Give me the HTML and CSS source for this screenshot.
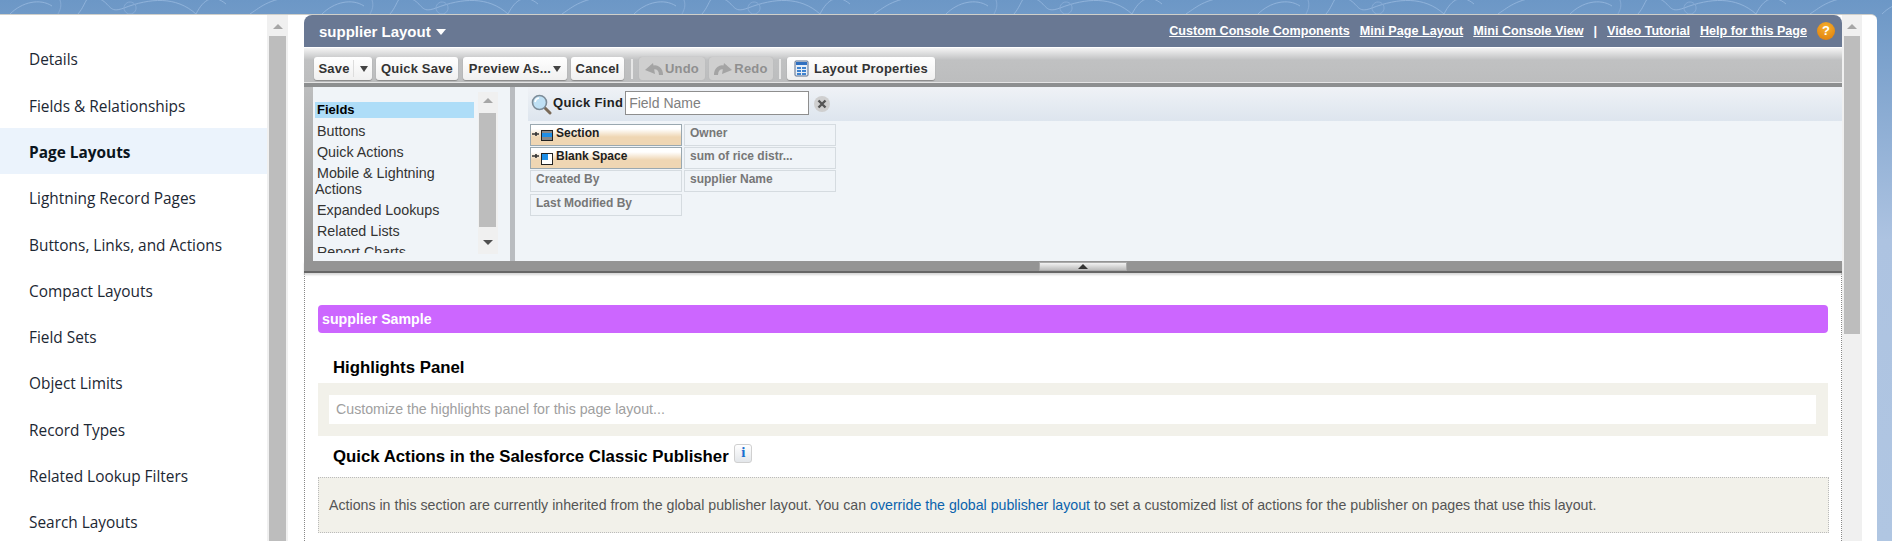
FILE: index.html
```html
<!DOCTYPE html>
<html lang="en">
<head>
    <meta charset="UTF-8">
    <title>supplier Layout</title>
    <link rel="stylesheet" href="styles.css">
</head>
<body>

    <svg class="waves" width="1892" height="80">
        <defs>
            <pattern id="wave" width="312" height="80" patternUnits="userSpaceOnUse">
                <path d="M10 14C22 2 40 -2 52 6M78 14C88 2 84 -6 98 -2C112 4 108 14 124 8C150 -2 176 -4 196 14C204 -2 214 -6 226 4M250 14C262 6 270 -2 300 -4" fill="none" stroke="#8fb2da" stroke-width="1"/>
                <path d="M130 2a6 6 0 1 0 .1 0M60 0C62 6 60 10 58 14" fill="none" stroke="#84a9d4" stroke-width="1"/>
            </pattern>
        </defs>
        <rect width="1892" height="80" fill="url(#wave)"/>
    </svg>

    <div class="shell">

        <!-- menu de la izquierda -->
        <ul class="side-menu">
            <li>Details</li>
            <li>Fields &amp; Relationships</li>
            <li class="active">Page Layouts</li>
            <li>Lightning Record Pages</li>
            <li>Buttons, Links, and Actions</li>
            <li>Compact Layouts</li>
            <li>Field Sets</li>
            <li>Object Limits</li>
            <li>Record Types</li>
            <li>Related Lookup Filters</li>
            <li>Search Layouts</li>
        </ul>
        <div class="scroll side-scroll">
            <span class="arrow-up"></span>
            <div class="thumb side-thumb"></div>
        </div>

        <div class="editor">
            <div class="editor-head">
                <div class="editor-title">supplier Layout <span class="caret"></span></div>
                <div class="head-links">
                    <a>Custom Console Components</a>
                    <a>Mini Page Layout</a>
                    <a>Mini Console View</a>
                    <span>|</span>
                    <a>Video Tutorial</a>
                    <a>Help for this Page</a>
                    <span class="help-icon">?</span>
                </div>
            </div>

            <div class="toolbar">
                <div class="btn btn-save"><span>Save</span><i class="split"></i><span class="tri-down"></span></div>
                <div class="btn btn-quick">Quick Save</div>
                <div class="btn btn-preview">Preview As...<span class="tri-down"></span></div>
                <div class="btn btn-cancel">Cancel</div>
                <i class="sep"></i>
                <div class="btn btn-off btn-undo">
                    <svg width="18" height="15" viewBox="0 0 18 15">
                        <path d="M16 14C16 8 12 5 7 7" fill="none" stroke="#a4a4a4" stroke-width="4"/>
                        <path d="M0 9L8 2L10 13z" fill="#a4a4a4"/>
                    </svg>
                    Undo
                </div>
                <div class="btn btn-off btn-redo">
                    <svg width="18" height="15" viewBox="0 0 18 15">
                        <path d="M2 14C2 8 6 5 11 7" fill="none" stroke="#a4a4a4" stroke-width="4"/>
                        <path d="M18 9L10 2L8 13z" fill="#a4a4a4"/>
                    </svg>
                    Redo
                </div>
                <i class="sep"></i>
                <div class="btn btn-props">
                    <svg width="15" height="17" viewBox="0 0 15 17">
                        <rect x="1" y="1" width="13" height="15" rx="1" fill="#e8eef6" stroke="#5a6f8c"/>
                        <rect x="2" y="2" width="11" height="3" fill="#2f6fc0"/>
                        <path d="M3 7h4v2H3zM8 7h4v2H8zM3 10h4v2H3zM8 10h4v2H8zM3 13h4v2H3zM8 13h4v2H8z" fill="#3f83cf"/>
                    </svg>
                    Layout Properties
                </div>
            </div>

            <div class="palette">
                <div class="palette-left">
                    <ul class="cat-list">
                        <li class="cat-on">Fields</li>
                        <li>Buttons</li>
                        <li>Quick Actions</li>
                        <li>Mobile &amp; Lightning Actions</li>
                        <li>Expanded Lookups</li>
                        <li>Related Lists</li>
                        <li>Report Charts</li>
                    </ul>
                    <div class="scroll cat-scroll">
                        <span class="arrow-up"></span>
                        <div class="thumb cat-thumb"></div>
                        <span class="arrow-down"></span>
                    </div>
                </div>
                <div class="palette-right">
                    <div class="quick-find">
                        <svg width="21" height="21" viewBox="0 0 21 21">
                            <path d="M13 13l6 6" stroke="#7a6a58" stroke-width="3" stroke-linecap="round"/>
                            <circle cx="8.5" cy="8.5" r="7" fill="#bfe0f4" stroke="#7d8c98" stroke-width="1.6"/>
                            <path d="M4 8a5 5 0 0 1 4-4" fill="none" stroke="#fff" stroke-width="1.6"/>
                        </svg>
                        <b>Quick Find</b>
                        <input class="find-box" type="text" placeholder="Field Name">
                        <span class="clear-icon">
                            <svg width="10" height="10" viewBox="0 0 10 10"><path d="M1.5 1.5l7 7M8.5 1.5l-7 7" stroke="#555" stroke-width="2.4"/></svg>
                        </span>
                    </div>
                    <div class="chips">
                        <div class="chip chip-drag">
                            <svg width="22" height="12" viewBox="0 0 22 12">
                                <path d="M5 3v4M1 5h7" stroke="#333" stroke-width="1.6"/>
                                <rect x="10.5" y="1.5" width="11" height="10" fill="#1e8ee6" stroke="#222"/>
                                <rect x="11" y="2" width="10" height="2" fill="#888"/>
                                <rect x="11" y="8" width="10" height="3" fill="#888"/>
                            </svg>
                            Section
                        </div>
                        <div class="chip">Owner</div>
                        <div class="chip chip-drag">
                            <svg width="22" height="13" viewBox="0 0 22 13">
                                <path d="M5 2v4M1 4h7" stroke="#333" stroke-width="1.6"/>
                                <rect x="10.5" y="1.5" width="11" height="11" fill="#fff" stroke="#222"/>
                                <rect x="11" y="2" width="6" height="6" fill="#1e8ee6"/>
                            </svg>
                            Blank Space
                        </div>
                        <div class="chip">sum of rice distr...</div>
                        <div class="chip">Created By</div>
                        <div class="chip">supplier Name</div>
                        <div class="chip chip-last">Last Modified By</div>
                    </div>
                </div>
            </div>

            <div class="splitter">
                <div class="splitter-handle"><span class="arrow-up arrow-dark"></span></div>
            </div>

            <div class="layout-body">
                <div class="sample-bar">supplier Sample</div>

                <h3 class="sec-title first">Highlights Panel</h3>
                <div class="highlights">
                    <div class="highlights-in">Customize the highlights panel for this page layout...</div>
                </div>

                <h3 class="sec-title second">Quick Actions in the Salesforce Classic Publisher <span class="info-icon">i</span></h3>
                <div class="inherit-box">
                    Actions in this section are currently inherited from the global publisher layout. You can <a>override the global publisher layout</a> to set a customized list of actions for the publisher on pages that use this layout.
                </div>
            </div>
        </div>

        <div class="scroll main-scroll">
            <span class="arrow-up"></span>
            <div class="thumb main-thumb"></div>
        </div>
    </div>

</body>
</html>
```

FILE: styles.css
```css
html, body {
    margin: 0;
    height: 541px;
    overflow: hidden;
}
body {
    font-family: "Liberation Sans", Arial, sans-serif;
    background: linear-gradient(#6c97c6 0, #adc3e1 240px, #b0c6e2 541px);
    position: relative;
}
ul {
    list-style: none;
    margin: 0;
    padding: 0;
}
.waves {
    position: absolute;
    top: 0;
    left: 0;
}

.shell {
    position: relative;
    display: flex;
    height: 526px;
    margin: 14px 15px 0 0;
    background-color: #fff;
    border-top: 1px solid #cfcfca;
    border-top-right-radius: 6px;
    overflow: hidden;
}

/* menu izquierdo */
.side-menu {
    width: 267px;
    flex: none;
    padding-top: 20.4px;
    font-family: "Open Sans", sans-serif;
    font-size: 15.4px;
}
.side-menu li {
    height: 46.3px;
    line-height: 50px;
    padding-left: 29px;
    box-sizing: border-box;
    color: #1c2733;
}
.side-menu .active {
    background-color: #ebf3fc;
    font-weight: 700;
    color: #0b1520;
}

/* barras de scroll */
.scroll {
    flex: none;
    display: flex;
    flex-direction: column;
    align-items: center;
    background-color: #f0f0f0;
}
.thumb {
    background-color: #bdbdbd;
}
.arrow-up, .arrow-down, .tri-down, .caret {
    display: block;
    width: 0;
    height: 0;
    border-left: 5px solid transparent;
    border-right: 5px solid transparent;
}
.arrow-up {
    border-bottom: 5px solid #a6a6a6;
}
.arrow-down {
    border-top: 5px solid #505050;
}
.side-scroll {
    width: 21px;
    margin-right: 16px;
    padding-top: 9px;
    box-sizing: border-box;
}
.side-thumb {
    width: 17px;
    flex: 1;
    margin-top: 7px;
}
.main-scroll {
    width: 20px;
    padding-top: 9px;
    box-sizing: border-box;
}
.main-thumb {
    width: 16px;
    height: 298px;
    margin-top: 7px;
}

/* editor */
.editor {
    width: 1538px;
    flex: none;
}
.editor-head {
    height: 32px;
    display: flex;
    align-items: center;
    justify-content: space-between;
    padding: 0 7px 0 15px;
    background-color: #697893;
    border-radius: 8px 8px 0 0;
    color: #fff;
}
.editor-title {
    display: flex;
    align-items: center;
    font-size: 15px;
    font-weight: bold;
}
.caret {
    margin-left: 5px;
    margin-top: 2px;
    border-top: 6px solid #fff;
}
.head-links {
    display: flex;
    align-items: center;
    gap: 10px;
    font-size: 12.6px;
    font-weight: bold;
}
.head-links a {
    text-decoration: underline;
}
.help-icon {
    width: 18px;
    height: 18px;
    border-radius: 50%;
    background: radial-gradient(circle at 50% 30%, #f7b12e, #dd7a08);
    font-size: 13px;
    font-weight: bold;
    line-height: 18px;
    text-align: center;
    color: #fff;
}

.toolbar {
    height: 40px;
    display: flex;
    align-items: flex-start;
    padding: 9px 0 0 10px;
    box-sizing: border-box;
    border-top: 1px solid #fff;
    border-bottom: 4px solid #8d8f90;
    background: linear-gradient(#f4f4f4 0, #c0c1c2 12px, #bcbdbe 100%);
    box-shadow: inset 0 -1px 0 #e4e4e4;
}
.btn {
    height: 23px;
    box-sizing: border-box;
    display: flex;
    align-items: center;
    justify-content: center;
    flex: none;
    border-radius: 3px;
    background: linear-gradient(#fff, #f0f0f0);
    box-shadow: 0 1px 1px #888;
    font-size: 13px;
    font-weight: bold;
    color: #333;
    margin-right: 3px;
    letter-spacing: 0.2px;
}
.btn-save {
    width: 58px;
    margin-right: 4px;
}
.split {
    width: 1px;
    height: 17px;
    background-color: #ddd;
    margin: 0 6px 0 3px;
}
.tri-down {
    border-left-width: 4px;
    border-right-width: 4px;
    border-top: 6px solid #444;
}
.btn-quick {
    width: 82px;
    margin-right: 5px;
}
.btn-preview {
    width: 104px;
    margin-right: 4px;
}
.btn-preview .tri-down {
    margin-left: 2px;
}
.btn-cancel {
    width: 53px;
}
.sep {
    width: 2px;
    height: 20px;
    margin: 2px 6px 0 4px;
    background-color: #e6e6e6;
}
.btn-off {
    background: #cfcfcf;
    color: #8f8f8f;
    box-shadow: 0 0 1px #aaa;
    gap: 2px;
}
.btn-undo {
    width: 66px;
    margin-right: 4px;
}
.btn-redo {
    width: 64px;
    margin-right: 2px;
}
.btn-props {
    width: 148px;
    gap: 5px;
}

/* paleta */
.palette {
    height: 174px;
    display: flex;
    border-left: 9px solid #a0a0a0;
    border-image: linear-gradient(#bcbdbe, #949494) 1;
    background-color: #f0f4f8;
}
.palette-left {
    width: 197px;
    flex: none;
    display: flex;
    align-items: flex-start;
    border-right: 5px solid #b9bcc0;
    box-sizing: content-box;
}
.cat-list {
    width: 159px;
    height: 151px;
    margin-left: 2px;
    padding-top: 15px;
    overflow: hidden;
    font-size: 14.3px;
    line-height: 16px;
    color: #333;
    flex: none;
}
.cat-list li {
    margin-bottom: 5px;
    text-indent: 2px;
}
.cat-list .cat-on {
    background-color: #aeddf8;
    font-size: 13px;
    font-weight: bold;
    color: #000;
}
.cat-scroll {
    width: 20px;
    height: 162px;
    margin: 5px 0 0 3.5px;
    padding-top: 6px;
    box-sizing: border-box;
}
.cat-thumb {
    width: 17px;
    height: 114px;
    margin-top: 10px;
    margin-bottom: 13px;
}
.palette-right {
    flex: 1;
}
.quick-find {
    height: 34px;
    margin-left: 13px;
    padding-left: 3px;
    display: flex;
    align-items: center;
    background: linear-gradient(#eff2f6, #dde5ee);
    font-size: 13px;
    color: #222;
}
.quick-find b {
    margin: 0 2px 4px 1px;
    letter-spacing: 0.3px;
}
.find-box {
    width: 184px;
    height: 24px;
    box-sizing: border-box;
    margin: 0 5px 2px 0;
    padding: 0 3px;
    border: 1px solid #8e8e8e;
    border-radius: 0;
    outline: none;
    font-family: "Liberation Sans", Arial, sans-serif;
    font-size: 14px;
}
.find-box::placeholder {
    color: #808080;
    opacity: 1;
}
.clear-icon {
    width: 16px;
    height: 16px;
    border-radius: 50%;
    background-color: #cfcfcf;
    display: flex;
    align-items: center;
    justify-content: center;
}
.chips {
    display: grid;
    grid-template-columns: 152px 152px;
    column-gap: 2px;
    row-gap: 1px;
    margin: 3px 0 0 15px;
}
.chip {
    height: 22px;
    box-sizing: border-box;
    border: 1px solid #d5dbe0;
    padding: 1px 0 0 5px;
    font-size: 12px;
    line-height: 15px;
    font-weight: bold;
    color: #777;
}
.chip-drag {
    display: flex;
    align-items: flex-start;
    gap: 3px;
    padding-left: 0;
    border-color: #9aa8b0;
    background: linear-gradient(#fff 0, #fff 4px, #efd6b3 12px, #efd6b3 100%);
    color: #1e1e1e;
}
.chip-drag svg {
    margin: 3px 0 0 0;
}
.chip-last {
    margin-top: 1px;
}

.splitter {
    height: 12px;
    box-sizing: border-box;
    background-color: #949494;
    border-bottom: 2px solid #666;
    box-shadow: 0 2px 2px #d8d8d8;
    padding: 1px 0 0 735px;
    position: relative;
}
.splitter-handle {
    width: 88px;
    height: 9px;
    box-sizing: border-box;
    border: 1px solid #aaa;
    background: linear-gradient(#f2f2f2, #bcbcbc);
    display: flex;
    justify-content: center;
    align-items: center;
}
.arrow-dark {
    border-bottom-color: #333;
}

/* cuerpo del layout */
.layout-body {
    height: 268px;
    box-sizing: border-box;
    padding: 32px 12px 0 13px;
    border-left: 1px dotted #888;
    border-right: 1px dotted #888;
}
.sample-bar {
    height: 28px;
    line-height: 28px;
    margin-right: 1px;
    padding-left: 4px;
    border-radius: 4px;
    background-color: #cc66ff;
    color: #fff;
    font-size: 14.2px;
    font-weight: bold;
}
.sec-title {
    margin: 0;
    padding-left: 15px;
    height: 20px;
    line-height: 20px;
    font-size: 16.8px;
    font-weight: bold;
    color: #000;
}
.sec-title.first {
    margin-top: 25px;
}
.sec-title.second {
    margin-top: 11px;
    display: flex;
    align-items: flex-start;
    gap: 1px;
    white-space: pre;
}
.highlights {
    height: 53px;
    box-sizing: border-box;
    margin-top: 5px;
    margin-right: 1px;
    padding: 12px 12px 0 11px;
    background-color: #f2f1ea;
}
.highlights-in {
    height: 29px;
    line-height: 29px;
    padding-left: 7px;
    background-color: #fff;
    font-size: 14.2px;
    color: #a0a0a0;
}
.info-icon {
    width: 18px;
    height: 19px;
    margin-top: -3px;
    box-sizing: border-box;
    border: 1px solid #d0d0d0;
    border-radius: 3px;
    background: linear-gradient(#fff, #e3e6ea);
    font-family: "Liberation Serif", serif;
    font-size: 15px;
    font-weight: bold;
    line-height: 15px;
    text-align: center;
    color: #1a6fd0;
}
.inherit-box {
    height: 56px;
    line-height: 54px;
    box-sizing: border-box;
    margin-top: 10px;
    padding-left: 10px;
    border: 1px dotted #bbb;
    background-color: #f2f1ea;
    font-size: 14.2px;
    color: #555;
    white-space: nowrap;
}
.inherit-box a {
    color: #0b63ad;
}
```
